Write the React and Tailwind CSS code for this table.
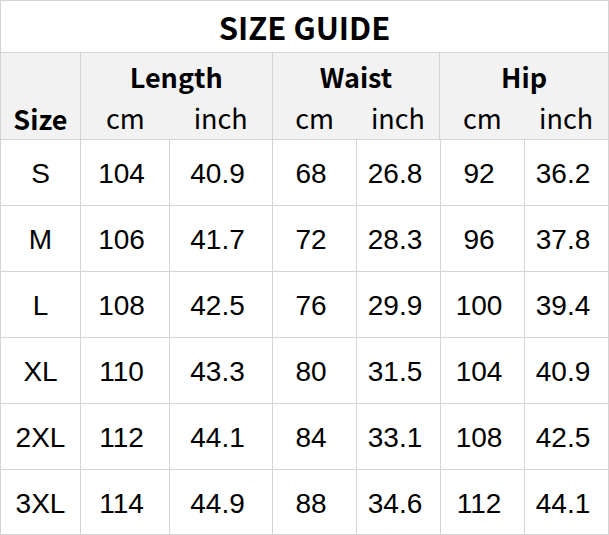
const groups = ["Length", "Waist", "Hip"];

const rows = [
	["S", "104", "40.9", "68", "26.8", "92", "36.2"],
	["M", "106", "41.7", "72", "28.3", "96", "37.8"],
	["L", "108", "42.5", "76", "29.9", "100", "39.4"],
	["XL", "110", "43.3", "80", "31.5", "104", "40.9"],
	["2XL", "112", "44.1", "84", "33.1", "108", "42.5"],
	["3XL", "114", "44.9", "88", "34.6", "112", "44.1"],
];

// column widths incl. right border
const widths = ["w-[80px]", "w-[89px]", "w-[103px]", "w-[84px]", "w-[84px]", "w-[84px]", "w-[84px]"];

const head = { fontFamily: '"Noto Sans CJK SC", "Noto Sans", sans-serif' };
const body = { fontFamily: '"Liberation Sans", Arial, sans-serif' };

const App = () => {
	return (
		<div className="w-[609px] h-[535px] bg-white border border-[#d4d4d4] text-black">
			<div
				className="h-[52px] border-b border-[#d4d4d4] flex items-center justify-center pt-[1px] text-[31px] font-bold"
				style={head}
			>
				SIZE GUIDE
			</div>

			<div className="h-[86px] flex bg-[#f2f2f2]" style={head}>
				<div className="w-[80px] border-r border-[#d4d4d4] flex items-end justify-center text-[27px] font-bold">
					Size
				</div>
				{groups.map((g, i) => (
					<div
						key={g}
						className={`flex flex-col ${i === 0 ? "w-[192px]" : "w-[168px]"} ${i < 2 ? "border-r border-[#d4d4d4]" : ""}`}
					>
						<div className="h-[48px] flex items-center justify-center pt-[4px] text-[27px] font-bold">{g}</div>
						<div className="flex flex-1 text-[27px] pb-[1px]">
							<div className={`${i === 0 ? "w-[89px]" : "w-[84px]"} flex items-center justify-center`}>cm</div>
							<div className="flex-1 flex items-center justify-center">inch</div>
						</div>
					</div>
				))}
			</div>

			{rows.map((r) => (
				<div key={r[0]} className="h-[66px] flex border-t border-[#d4d4d4] first:border-t-0" style={body}>
					{r.map((v, i) => (
						<div
							key={i}
							className={`${widths[i]} ${i < 6 ? "border-r border-[#d4d4d4]" : "flex-1"} ${i > 0 ? "pr-[7px]" : ""} flex items-center justify-center pt-[2px] text-[28px]`}
						>
							{v}
						</div>
					))}
				</div>
			))}
		</div>
	);
};

export default App;
